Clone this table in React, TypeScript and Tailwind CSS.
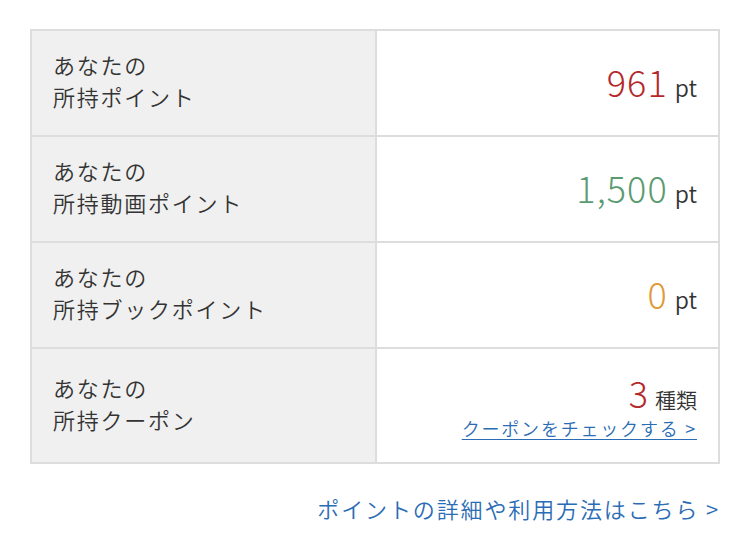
import React from 'react';

const ROWS = [
  { id: 'point', label: '所持ポイント', value: '961', unit: 'pt', color: 'text-[#b3292b]' },
  { id: 'video', label: '所持動画ポイント', value: '1,500', unit: 'pt', color: 'text-[#5a9b72]' },
  { id: 'book', label: '所持ブックポイント', value: '0', unit: 'pt', color: 'text-[#df9a3a]' },
];

const App: React.FC = () => {
  return (
    <div className="w-[750px] h-[536px] bg-white pt-[29px] px-[30px] font-['Noto_Sans_CJK_JP',sans-serif] text-[#333]">
      <table className="w-[690px] border-collapse border-2 border-[#dddddd]">
        <tbody>
          {ROWS.map((row) => (
            <tr key={row.id} className="h-[106px]">
              <td className="w-[345px] border-2 border-[#dddddd] bg-[#f0f0f0] pl-[21px] pb-[6px] text-[22px] leading-[32px] tracking-[0.08em] font-[350]">
                あなたの
                <br />
                {row.label}
              </td>
              <td className="border-2 border-[#dddddd] pr-[21px] text-right align-middle">
                <span className={`${row.color} text-[36px] leading-[40px] tracking-[0.03em] font-light`}>{row.value}</span>
                <span className="ml-[7px] text-[23px] font-[350]">{row.unit}</span>
              </td>
            </tr>
          ))}
          <tr className="h-[115px]">
            <td className="w-[345px] border-2 border-[#dddddd] bg-[#f0f0f0] pl-[21px] pb-[6px] text-[22px] leading-[32px] tracking-[0.08em] font-[350]">
              あなたの
              <br />
              所持クーポン
            </td>
            <td className="border-2 border-[#dddddd] pr-[21px] text-right align-middle">
              <div className="leading-[40px]">
                <span className="text-[36px] text-[#b3292b] font-light">3</span>
                <span className="ml-[7px] text-[21px] font-[350]">種類</span>
              </div>
              <a href="#" className="block mt-[-4px] text-[18px] leading-[22px] text-[#2a6cb5] underline underline-offset-[3px] tracking-[0.1em] font-[350]">
                クーポンをチェックする &gt;
              </a>
            </td>
          </tr>
        </tbody>
      </table>
      <div className="mt-[26px] text-right">
        <a href="#" className="text-[22px] leading-[36px] text-[#2a6cb5] tracking-[0.085em] font-[350]">
          ポイントの詳細や利用方法はこちら &gt;
        </a>
      </div>
    </div>
  );
};

export default App;
